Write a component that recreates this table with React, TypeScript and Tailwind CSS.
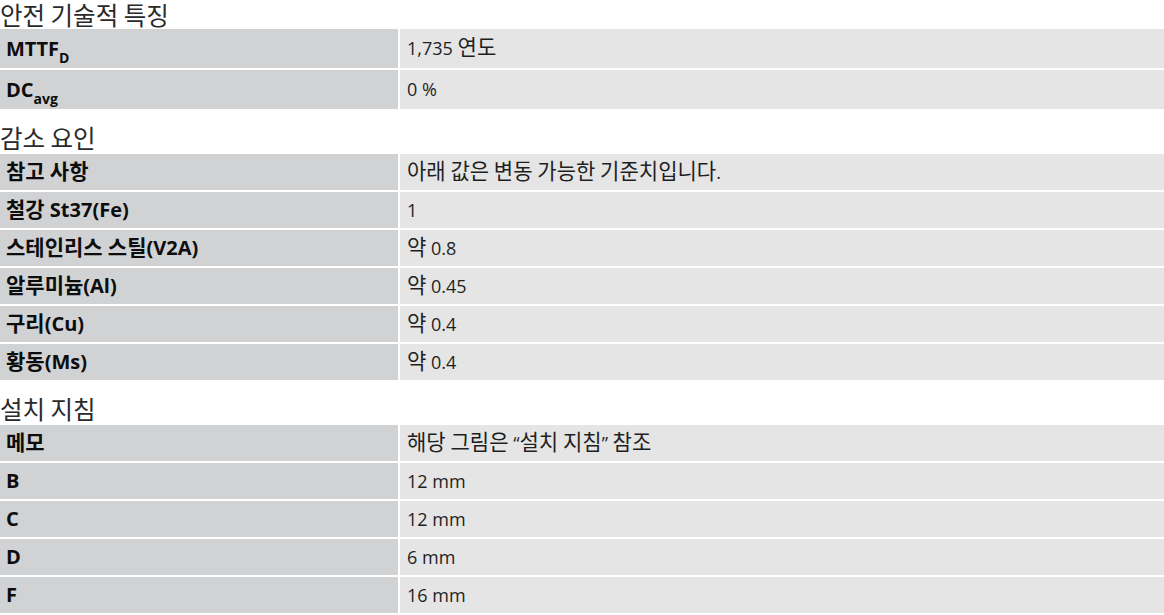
import type { ReactNode } from 'react'

type Row = { label: ReactNode; value: string }

const font = { fontFamily: '"Open Sans", "Noto Sans CJK KR", sans-serif' }

// hangul in the reference is set a bit larger than the latin text
function Ko({ text, scale }: { text: string; scale: string }) {
  const parts = text.split(/([\uAC00-\uD7A3]+)/)
  return (
    <>
      {parts.map((p, i) =>
        /[\uAC00-\uD7A3]/.test(p) ? (
          <span key={i} className={`${scale} leading-none`} style={{ fontFamily: '"Noto Sans CJK KR", sans-serif' }}>
            {p}
          </span>
        ) : (
          <span key={i}>{p}</span>
        ),
      )}
    </>
  )
}

const sections: { title: string; tall?: boolean; rows: Row[] }[] = [
  {
    title: '안전 기술적 특징',
    tall: true,
    rows: [
      { label: <>MTTF<sub className="text-[14px] align-[-4px]">D</sub></>, value: '1,735 연도' },
      { label: <>DC<sub className="text-[14px] align-[-4px]">avg</sub></>, value: '0 %' },
    ],
  },
  {
    title: '감소 요인',
    rows: [
      { label: '참고 사항', value: '아래 값은 변동 가능한 기준치입니다.' },
      { label: '철강 St37(Fe)', value: '1' },
      { label: '스테인리스 스틸(V2A)', value: '약 0.8' },
      { label: '알루미늄(Al)', value: '약 0.45' },
      { label: '구리(Cu)', value: '약 0.4' },
      { label: '황동(Ms)', value: '약 0.4' },
    ],
  },
  {
    title: '설치 지침',
    rows: [
      { label: '메모', value: '해당 그림은 “설치 지침” 참조' },
      { label: 'B', value: '12 mm' },
      { label: 'C', value: '12 mm' },
      { label: 'D', value: '6 mm' },
      { label: 'F', value: '16 mm' },
    ],
  },
]

export default function App() {
  return (
    <div className="w-[1164px] bg-white text-[#1f1f1f] overflow-hidden" style={font}>
      {sections.map((s, i) => (
        <section key={s.title} className={i > 0 ? 'mt-[13px]' : ''}>
          <h2
            className={`${i === 0 ? 'leading-[28px] pt-[1px]' : 'leading-[32px]'} text-[24.5px] font-normal text-[#2a2a2a]`}
            style={{ fontFamily: '"Noto Sans CJK KR", sans-serif' }}
          >
            {s.title}
          </h2>
          <div className="grid grid-cols-[398px_1fr] gap-[2px]">
            {s.rows.map((r, j) => (
              <div key={j} className="contents">
                <div className={`${s.tall ? 'h-[39px]' : 'h-[36px]'} bg-[#d1d2d4] px-[6px] flex items-center font-bold text-[20px] text-[#0d0d0d]`}>
                  <span>{typeof r.label === 'string' ? <Ko text={r.label} scale="text-[1.05em]" /> : r.label}</span>
                </div>
                <div className={`${s.tall ? 'h-[39px]' : 'h-[36px]'} bg-[#e5e5e6] px-[7px] flex items-center text-[18px]`}>
                  <span>
                    <Ko text={r.value} scale="text-[1.17em]" />
                  </span>
                </div>
              </div>
            ))}
          </div>
        </section>
      ))}
    </div>
  )
}
